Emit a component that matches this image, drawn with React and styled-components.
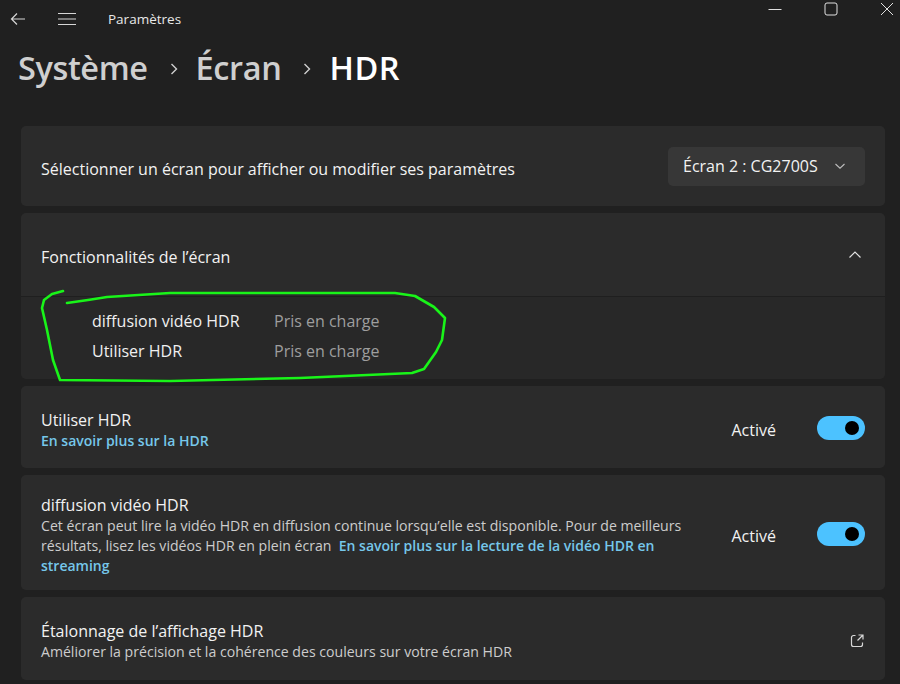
import styled, { createGlobalStyle } from "styled-components";

const GlobalStyle = createGlobalStyle`
  html, body {
    margin: 0;
    padding: 0;
    background: #202020;
  }
  * {
    box-sizing: border-box;
  }
`;

export default function App() {
  return (
    <Page>
      <GlobalStyle />
      <TitleBar>
        <BackButton>
          <svg width="16" height="14" viewBox="0 0 16 14" fill="none" stroke="#d6d6d6" strokeWidth="1.2">
            <path d="M15 7H1.5M7 1.5L1.5 7L7 12.5" />
          </svg>
        </BackButton>
        <MenuButton>
          <svg width="20" height="14" viewBox="0 0 20 14" fill="none" stroke="#d6d6d6" strokeWidth="1.2">
            <path d="M1 1.5H19M1 7H19M1 12.5H19" />
          </svg>
        </MenuButton>
        <AppTitle>Paramètres</AppTitle>
        <WindowControls>
          <WindowButton>
            <svg width="14" height="14" viewBox="0 0 14 14" fill="none" stroke="#e0e0e0" strokeWidth="1">
              <path d="M0.5 7.5H13.5" />
            </svg>
          </WindowButton>
          <WindowButton>
            <svg width="14" height="14" viewBox="0 0 14 14" fill="none" stroke="#e0e0e0" strokeWidth="1">
              <rect x="1" y="1" width="12" height="12" rx="2" />
            </svg>
          </WindowButton>
          <WindowButton>
            <svg width="14" height="14" viewBox="0 0 14 14" fill="none" stroke="#e0e0e0" strokeWidth="1">
              <path d="M1 1L13 13M13 1L1 13" />
            </svg>
          </WindowButton>
        </WindowControls>
      </TitleBar>

      <Breadcrumb>
        <Crumb>Système</Crumb>
        <CrumbChevron>
          <svg width="8" height="12" viewBox="0 0 8 12" fill="none" stroke="#cfcfcf" strokeWidth="1.4">
            <path d="M1.5 1L6.5 6L1.5 11" />
          </svg>
        </CrumbChevron>
        <Crumb>Écran</Crumb>
        <CrumbChevron>
          <svg width="8" height="12" viewBox="0 0 8 12" fill="none" stroke="#cfcfcf" strokeWidth="1.4">
            <path d="M1.5 1L6.5 6L1.5 11" />
          </svg>
        </CrumbChevron>
        <Crumb $current>HDR</Crumb>
      </Breadcrumb>

      <CardList>
        <Card $height={80}>
          <CardText>
            <Title>Sélectionner un écran pour afficher ou modifier ses paramètres</Title>
          </CardText>
          <Dropdown>
            <span>Écran 2 : CG2700S</span>
            <svg width="12" height="8" viewBox="0 0 12 8" fill="none" stroke="#bdbdbd" strokeWidth="1.1">
              <path d="M1.5 2L6 6.2L10.5 2" />
            </svg>
          </Dropdown>
        </Card>

        <Expander>
          <ExpanderHeader>
            <Title>Fonctionnalités de l’écran</Title>
            <svg width="14" height="9" viewBox="0 0 14 9" fill="none" stroke="#e0e0e0" strokeWidth="1.2">
              <path d="M1.5 7.5L7 2L12.5 7.5" />
            </svg>
          </ExpanderHeader>
          <ExpanderBody>
            <FeatureRow>
              <FeatureName>diffusion vidéo HDR</FeatureName>
              <FeatureValue>Pris en charge</FeatureValue>
            </FeatureRow>
            <FeatureRow>
              <FeatureName>Utiliser HDR</FeatureName>
              <FeatureValue>Pris en charge</FeatureValue>
            </FeatureRow>
          </ExpanderBody>
        </Expander>

        <Card $height={82}>
          <CardText>
            <Title>Utiliser HDR</Title>
            <Link>En savoir plus sur la HDR</Link>
          </CardText>
          <ToggleGroup>
            <ToggleLabel>Activé</ToggleLabel>
            <Toggle />
          </ToggleGroup>
        </Card>

        <Card $height={115}>
          <CardText>
            <Title>diffusion vidéo HDR</Title>
            <Description>
              Cet écran peut lire la vidéo HDR en diffusion continue lorsqu’elle est disponible. Pour de meilleurs
              <br />
              résultats, lisez les vidéos HDR en plein écran&nbsp;&nbsp;
              <Link as="span">
                En savoir plus sur la lecture de la vidéo HDR en
                <br />
                streaming
              </Link>
            </Description>
          </CardText>
          <ToggleGroup>
            <ToggleLabel>Activé</ToggleLabel>
            <Toggle />
          </ToggleGroup>
        </Card>

        <Card $height={83}>
          <CardText>
            <Title>Étalonnage de l’affichage HDR</Title>
            <Description>Améliorer la précision et la cohérence des couleurs sur votre écran HDR</Description>
          </CardText>
          <svg width="16" height="16" viewBox="0 0 16 16" fill="none" stroke="#d8d8d8" strokeWidth="1.2">
            <path d="M6.5 2.5H4.5A2 2 0 0 0 2.5 4.5V11.5A2 2 0 0 0 4.5 13.5H11.5A2 2 0 0 0 13.5 11.5V9.5" />
            <path d="M8.5 7.5L14 2M9.5 2H14V6.5" />
          </svg>
        </Card>
      </CardList>

      <Annotation width="900" height="684" viewBox="0 0 900 684">
        <path
          d="M63 291 L52 294 L44 300 L42 308 L47 330 L53 360 L60 380 L170 381 L300 378 L412 373 L424 369 L436 352 L442 340 L445 318 L434 307 L415 296 L395 293 L170 293 L107 297 L88 300 L67 303"
          fill="none"
          stroke="#19f419"
          strokeWidth="2.6"
          strokeLinejoin="round"
          strokeLinecap="round"
        />
      </Annotation>
    </Page>
  );
}

const Page = styled.div`
  position: relative;
  width: 900px;
  height: 684px;
  overflow: hidden;
  background: #202020;
  font-family: "Open Sans", "Noto Sans", sans-serif;
  color: #ffffff;
`;

const TitleBar = styled.div`
  display: flex;
  align-items: center;
  height: 38px;
`;

const BackButton = styled.div`
  display: flex;
  margin-left: 10px;
`;

const MenuButton = styled.div`
  display: flex;
  margin-left: 31px;
`;

const AppTitle = styled.div`
  margin-left: 31px;
  font-size: 13.5px;
  color: #e8e8e8;
`;

const WindowControls = styled.div`
  display: flex;
  gap: 30px;
  margin-left: auto;
  align-self: flex-start;
  padding-top: 2px;
`;

const WindowButton = styled.div`
  display: flex;
  justify-content: center;
  width: 26px;
`;

const Breadcrumb = styled.div`
  display: flex;
  align-items: center;
  height: 48px;
  margin-top: 5px;
  padding-left: 18px;
`;

const Crumb = styled.span`
  font-size: 32.5px;
  font-weight: 600;
  letter-spacing: ${(p) => (p.$current ? "0.6px" : "-0.4px")};
  color: ${(p) => (p.$current ? "#ffffff" : "#cfcfcf")};
`;

const CrumbChevron = styled.span`
  display: flex;
  margin: 4px 18px 0 22px;
`;

const CardList = styled.div`
  display: flex;
  flex-direction: column;
  gap: 7px;
  margin-top: 35px;
  padding: 0 15px 0 21px;
`;

const Card = styled.div`
  display: flex;
  align-items: center;
  justify-content: space-between;
  height: ${(p) => p.$height}px;
  padding: 5px 20px 0;
  background: #2b2b2b;
  border-radius: 5px;
`;

const CardText = styled.div`
  display: flex;
  flex-direction: column;
`;

const Title = styled.div`
  font-size: 16px;
  line-height: 22px;
  color: #f2f2f2;
`;

const Description = styled.div`
  font-size: 14.1px;
  line-height: 20px;
  color: #cdcdcd;
  white-space: nowrap;
`;

const Link = styled.div`
  font-size: 14px;
  line-height: 20px;
  font-weight: 600;
  color: #76c7ea;
`;

const Dropdown = styled.div`
  display: flex;
  align-items: center;
  justify-content: space-between;
  width: 197px;
  height: 39px;
  margin-top: -5px;
  padding: 0 19px 0 15px;
  background: #373737;
  border-radius: 5px;
  font-size: 16px;
  color: #f2f2f2;
`;

const Expander = styled.div`
  display: flex;
  flex-direction: column;
  border-radius: 5px;
  overflow: hidden;
`;

const ExpanderHeader = styled.div`
  display: flex;
  align-items: center;
  justify-content: space-between;
  height: 83px;
  padding: 0 23px 0 20px;
  background: #2b2b2b;

  ${Title} {
    margin-top: 4px;
  }
`;

const ExpanderBody = styled.div`
  display: flex;
  flex-direction: column;
  justify-content: center;
  height: 83px;
  padding: 0 0 4px 71px;
  background: #282828;
  border-top: 1px solid #1f1f1f;
`;

const FeatureRow = styled.div`
  display: grid;
  grid-template-columns: 182px auto;
  line-height: 30px;
  font-size: 16px;
`;

const FeatureName = styled.span`
  color: #f0f0f0;
`;

const FeatureValue = styled.span`
  color: #9e9e9e;
`;

const ToggleGroup = styled.div`
  display: flex;
  align-items: center;
  gap: 41px;
  margin-top: -3px;
`;

const ToggleLabel = styled.span`
  font-size: 16px;
  color: #f2f2f2;
  margin-top: 4px;
`;

const Toggle = styled.div`
  position: relative;
  width: 48px;
  height: 24px;
  border-radius: 12px;
  background: #4cc2ff;
  &::after {
    content: "";
    position: absolute;
    top: 5px;
    right: 6px;
    width: 14px;
    height: 14px;
    border-radius: 50%;
    background: #000000;
  }
`;

const Annotation = styled.svg`
  position: absolute;
  top: 0;
  left: 0;
  pointer-events: none;
`;
